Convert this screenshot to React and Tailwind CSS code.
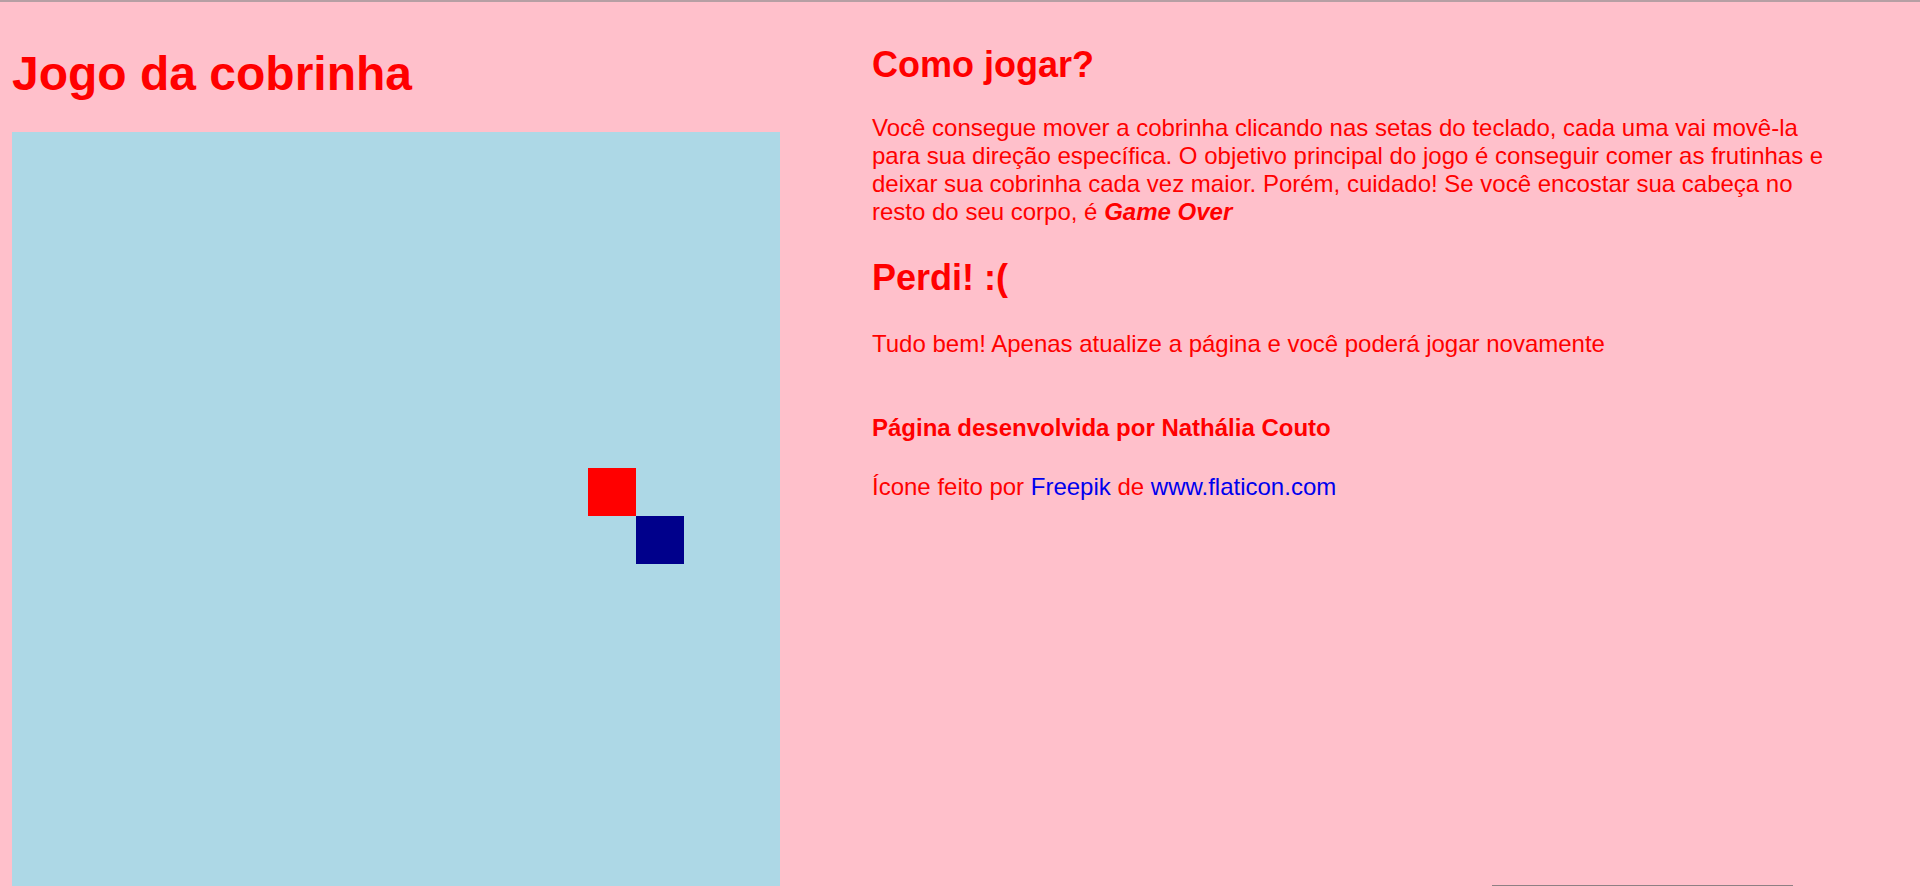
import React from 'react';

const SnakeBoard = () => (
  <div className="relative w-[768px] h-[768px] bg-[#add8e6]">
    {/* food and head sit on the 48px grid */}
    <div className="absolute left-[576px] top-[336px] w-[48px] h-[48px] bg-[#ff0000]" />
    <div className="absolute left-[624px] top-[384px] w-[48px] h-[48px] bg-[#00008b]" />
  </div>
);

const App = () => {
  return (
    <div className="min-h-screen bg-[#ffc0cb] flex p-[12px] font-['Liberation_Sans',Arial,sans-serif] text-[#ff0000]">
      <div className="fixed top-0 left-0 right-0 h-[2px] bg-[#b69fa4]" />

      <div className="w-[768px] shrink-0">
        <h1 className="mt-[34px] mb-[31px] text-[48px] font-bold leading-[1.15]">Jogo da cobrinha</h1>
        <SnakeBoard />
      </div>

      <div className="ml-[92px] w-[972px] shrink-0">
        <h2 className="mt-[32px] text-[36px] font-bold leading-[1.15]">Como jogar?</h2>
        <p className="mt-[29px] text-[24px] leading-[28px]">
          Você consegue mover a cobrinha clicando nas setas do teclado, cada uma vai movê-la para sua direção específica. O objetivo principal do jogo é conseguir comer as frutinhas e deixar sua cobrinha cada vez maior. Porém, cuidado! Se você encostar sua cabeça no resto do seu corpo, é <strong className="font-bold italic">Game Over</strong>
        </p>

        <h2 className="mt-[31px] text-[36px] font-bold leading-[1.15]">Perdi! :(</h2>
        <p className="mt-[31px] text-[24px] leading-[28px]">Tudo bem! Apenas atualize a página e você poderá jogar novamente</p>

        <h4 className="mt-[56px] text-[24px] font-bold leading-[28px]">Página desenvolvida por Nathália Couto</h4>
        <p className="mt-[31px] text-[24px] leading-[28px]">
          Ícone feito por <a href="#" className="text-[#0000ee]">Freepik</a> de <a href="#" className="text-[#0000ee]">www.flaticon.com</a>
        </p>
      </div>

      <div className="fixed bottom-0 left-[1492px] w-[301px] h-[1px] bg-[#8f7f83]" />
    </div>
  );
};

export default App;
